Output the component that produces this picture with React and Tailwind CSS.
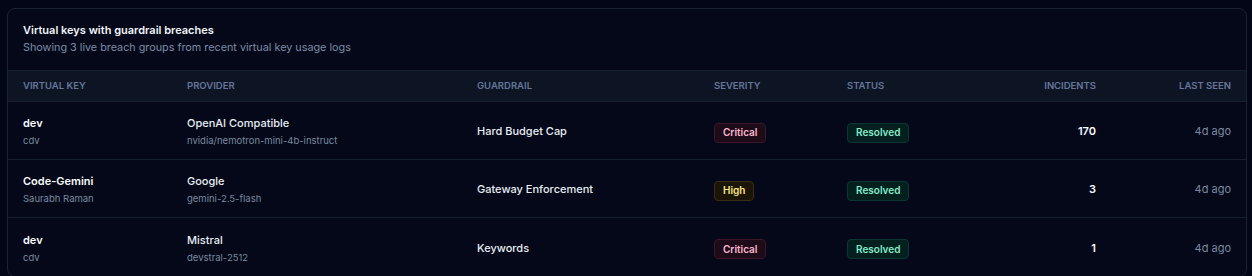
const rows = [
  {
    key: 'dev',
    owner: 'cdv',
    provider: 'OpenAI Compatible',
    model: 'nvidia/nemotron-mini-4b-instruct',
    guardrail: 'Hard Budget Cap',
    severity: 'Critical',
    status: 'Resolved',
    incidents: 170,
    lastSeen: '4d ago',
  },
  {
    key: 'Code-Gemini',
    owner: 'Saurabh Raman',
    provider: 'Google',
    model: 'gemini-2.5-flash',
    guardrail: 'Gateway Enforcement',
    severity: 'High',
    status: 'Resolved',
    incidents: 3,
    lastSeen: '4d ago',
  },
  {
    key: 'dev',
    owner: 'cdv',
    provider: 'Mistral',
    model: 'devstral-2512',
    guardrail: 'Keywords',
    severity: 'Critical',
    status: 'Resolved',
    incidents: 1,
    lastSeen: '4d ago',
  },
];

const severityStyles = {
  Critical: 'bg-[#1d0b1a] border-[#3b1728] text-[#fbb6ce]',
  High: 'bg-[#1b1508] border-[#3a2e12] text-[#fde68a]',
};

const cols = 'grid grid-cols-[164px_290px_237px_133px_120px_1fr_135px] items-center';

const App = () => {
  return (
    <div className="min-h-screen bg-[#030616] pl-[7px] pt-[8px] pr-[5px] font-['Inter',sans-serif]">
      <div className="rounded-lg border border-[#1a2234] bg-[#040818] overflow-hidden">
        <div className="px-[15px] pt-[12px] pb-[13px]">
          <h2 className="text-[11px] leading-[18px] font-semibold text-[#f1f5f9]">
            Virtual keys with guardrail breaches
          </h2>
          <p className="text-[10.8px] leading-[18px] text-[#7e8ca6]">
            Showing 3 live breach groups from recent virtual key usage logs
          </p>
        </div>

        <div className={`${cols} h-[32px] px-[15px] bg-[#0d1424] border-y border-[#172033] text-[9.5px] font-semibold uppercase text-[#66779a]`}>
          <div>Virtual key</div>
          <div>Provider</div>
          <div>Guardrail</div>
          <div>Severity</div>
          <div>Status</div>
          <div className="text-right">Incidents</div>
          <div className="text-right">Last seen</div>
        </div>

        {rows.map((r, idx) => (
          <div
            key={idx}
            className={`${cols} h-[58px] px-[15px] ${idx < rows.length - 1 ? 'border-b border-[#172033]' : ''}`}
          >
            <div className="pt-[3px]">
              <div className="text-[11px] leading-[18px] font-semibold text-[#f8fafc]">{r.key}</div>
              <div className="text-[9.5px] leading-[18px] text-[#7c8aa0]">{r.owner}</div>
            </div>
            <div className="pt-[3px]">
              <div className="text-[11px] leading-[18px] font-medium text-[#e8edf4]">{r.provider}</div>
              <div className="text-[9.5px] leading-[18px] text-[#7c8aa0]">{r.model}</div>
            </div>
            <div className="pt-[2px] text-[11px] font-medium text-[#e8edf4]">{r.guardrail}</div>
            <div>
              <span className={`inline-flex items-center h-[20px] px-[8px] rounded-[4px] border text-[10px] font-semibold ${severityStyles[r.severity]}`}>
                {r.severity}
              </span>
            </div>
            <div>
              <span className="inline-flex items-center h-[20px] px-[8px] rounded-[4px] border bg-[#03201f] border-[#0b3634] text-[10px] font-semibold text-[#86ecc8]">
                {r.status}
              </span>
            </div>
            <div className="pt-[2px] text-right text-[11px] font-semibold text-[#f8fafc]">{r.incidents}</div>
            <div className="pt-[2px] text-right text-[11px] text-[#7c8aa0]">{r.lastSeen}</div>
          </div>
        ))}
      </div>
    </div>
  );
};

export default App;
